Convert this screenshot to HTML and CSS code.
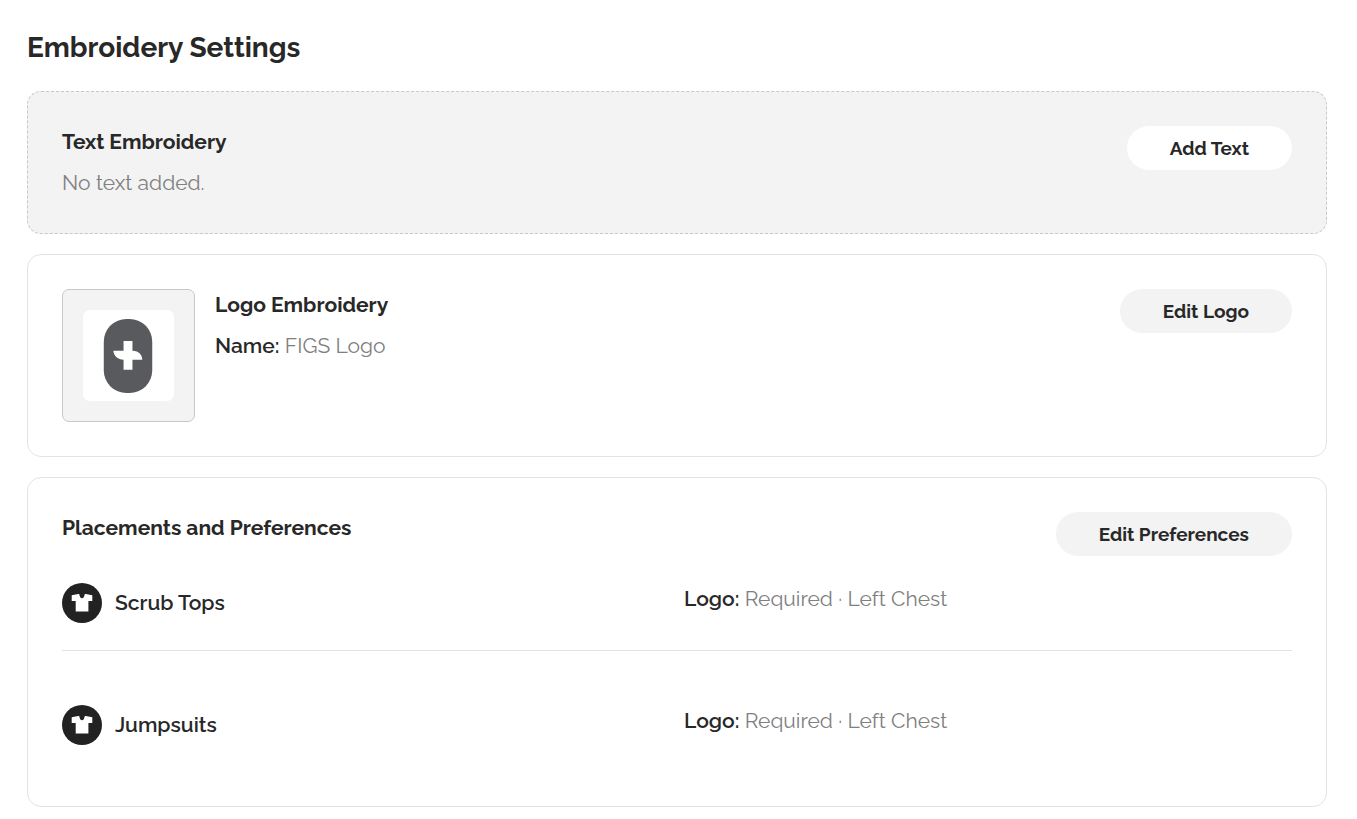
FILE: index.html
```html
<!DOCTYPE html>
<html lang="en">
<head>
<meta charset="utf-8">
<meta name="viewport" content="width=device-width, initial-scale=1">
<title>Embroidery Settings</title>
<link rel="stylesheet" href="styles.css">
</head>
<body>
<main class="settings">
  <h1 class="settings-title">Embroidery Settings</h1>

  <section class="card card-empty">
    <div class="card-text">
      <h2 class="card-title">Text Embroidery</h2>
      <p class="detail">No text added.</p>
    </div>
    <button class="button button-light" type="button">Add Text</button>
  </section>

  <section class="card">
    <div class="thumb">
      <svg class="thumb-image" viewBox="0 0 92 92" role="img" aria-label="FIGS Logo">
        <rect width="92" height="92" rx="7" fill="#fff"/>
        <rect x="21" y="9" width="49" height="75" rx="23" fill="#595a5e"/>
        <path d="M41 31.300h9v10c5.500 0 9.500 3.300 10 8.900H50v10.300h-9V50.200c-5.500 0-9.800-3.300-10.300-8.900H41z" fill="#fff"/>
      </svg>
    </div>
    <div class="card-text">
      <h2 class="card-title">Logo Embroidery</h2>
      <p class="detail"><strong class="label">Name:</strong> FIGS Logo</p>
    </div>
    <button class="button" type="button">Edit Logo</button>
  </section>

  <section class="card card-stacked">
    <div class="card-header">
      <h2 class="card-title">Placements and Preferences</h2>
      <button class="button" type="button">Edit Preferences</button>
    </div>
    <ul class="placements">
      <li class="placement">
        <div class="garment">
          <svg class="garment-icon" viewBox="0 0 40 40" aria-hidden="true">
            <circle cx="20" cy="20" r="20" fill="#222"/>
            <path d="M9.700 12.300 16.200 11h1c.5 2.800 1.400 4.300 2.800 4.300s2.300-1.500 2.800-4.300h1l6.500 1.300v5.600h-3.900v10.600H13.700V17.900h-4z" fill="#fff"/>
          </svg>
          <span class="garment-name">Scrub Tops</span>
        </div>
        <p class="detail"><strong class="label">Logo:</strong> Required · Left Chest</p>
      </li>
      <li class="placement">
        <div class="garment">
          <svg class="garment-icon" viewBox="0 0 40 40" aria-hidden="true">
            <circle cx="20" cy="20" r="20" fill="#222"/>
            <path d="M9.700 12.300 16.200 11h1c.5 2.800 1.400 4.300 2.800 4.300s2.300-1.500 2.800-4.300h1l6.500 1.300v5.600h-3.900v10.600H13.700V17.900h-4z" fill="#fff"/>
          </svg>
          <span class="garment-name">Jumpsuits</span>
        </div>
        <p class="detail"><strong class="label">Logo:</strong> Required · Left Chest</p>
      </li>
    </ul>
  </section>
</main>
</body>
</html>
```
FILE: styles.css
```css
* {
  box-sizing: border-box;
}

body {
  margin: 0;
  background: #fff;
  color: #282828;
  font-family: Raleway, Inter, sans-serif;
  font-size: 21px;
  line-height: 32px;
}

h1, h2, p, ul {
  margin: 0;
  padding: 0;
}

.settings {
  display: flex;
  flex-direction: column;
  gap: 20px;
  padding: 30px 30px 13px 27px;
}

.settings-title {
  margin-bottom: 5px;
  font-size: 28px;
  font-weight: 700;
  line-height: 36px;
}

.card {
  display: flex;
  align-items: flex-start;
  gap: 20px;
  padding: 34px;
  border: 1px solid #e3e3e3;
  border-radius: 14px;
}

.card-empty {
  border: 1px dashed #c8c8c8;
  background: #f3f3f3;
}

.card-stacked {
  flex-direction: column;
  align-items: stretch;
  gap: 27px;
}

.card-header {
  display: flex;
  align-items: flex-start;
  justify-content: space-between;
}

.card-text {
  display: flex;
  flex: 1;
  flex-direction: column;
  gap: 9px;
}

.card-title {
  font-size: 21px;
  font-weight: 700;
}

.detail {
  color: #808080;
  font-weight: 400;
}

.label {
  color: #282828;
  font-weight: 600;
}

.button {
  padding: 6px 43px;
  border: 0;
  border-radius: 22px;
  background: #f3f3f3;
  color: #282828;
  font: inherit;
  font-size: 19px;
  font-weight: 700;
}

.button-light {
  background: #fff;
}

.thumb {
  padding: 20px;
  border: 1px solid #c8c8c8;
  border-radius: 7px;
  background: #f3f3f3;
}

.thumb-image {
  display: block;
  width: 91px;
  height: 91px;
}

.placements {
  display: flex;
  flex-direction: column;
  gap: 54px;
  list-style: none;
}

.placement {
  display: grid;
  grid-template-columns: 1fr 1fr;
  gap: 14px;
  padding-bottom: 27px;
}

.placement:not(:last-child) {
  border-bottom: 1px solid #e3e3e3;
}

.garment {
  display: flex;
  align-items: center;
  gap: 13px;
}

.garment-icon {
  width: 40px;
  height: 40px;
}

.garment-name {
  font-weight: 600;
}
```
